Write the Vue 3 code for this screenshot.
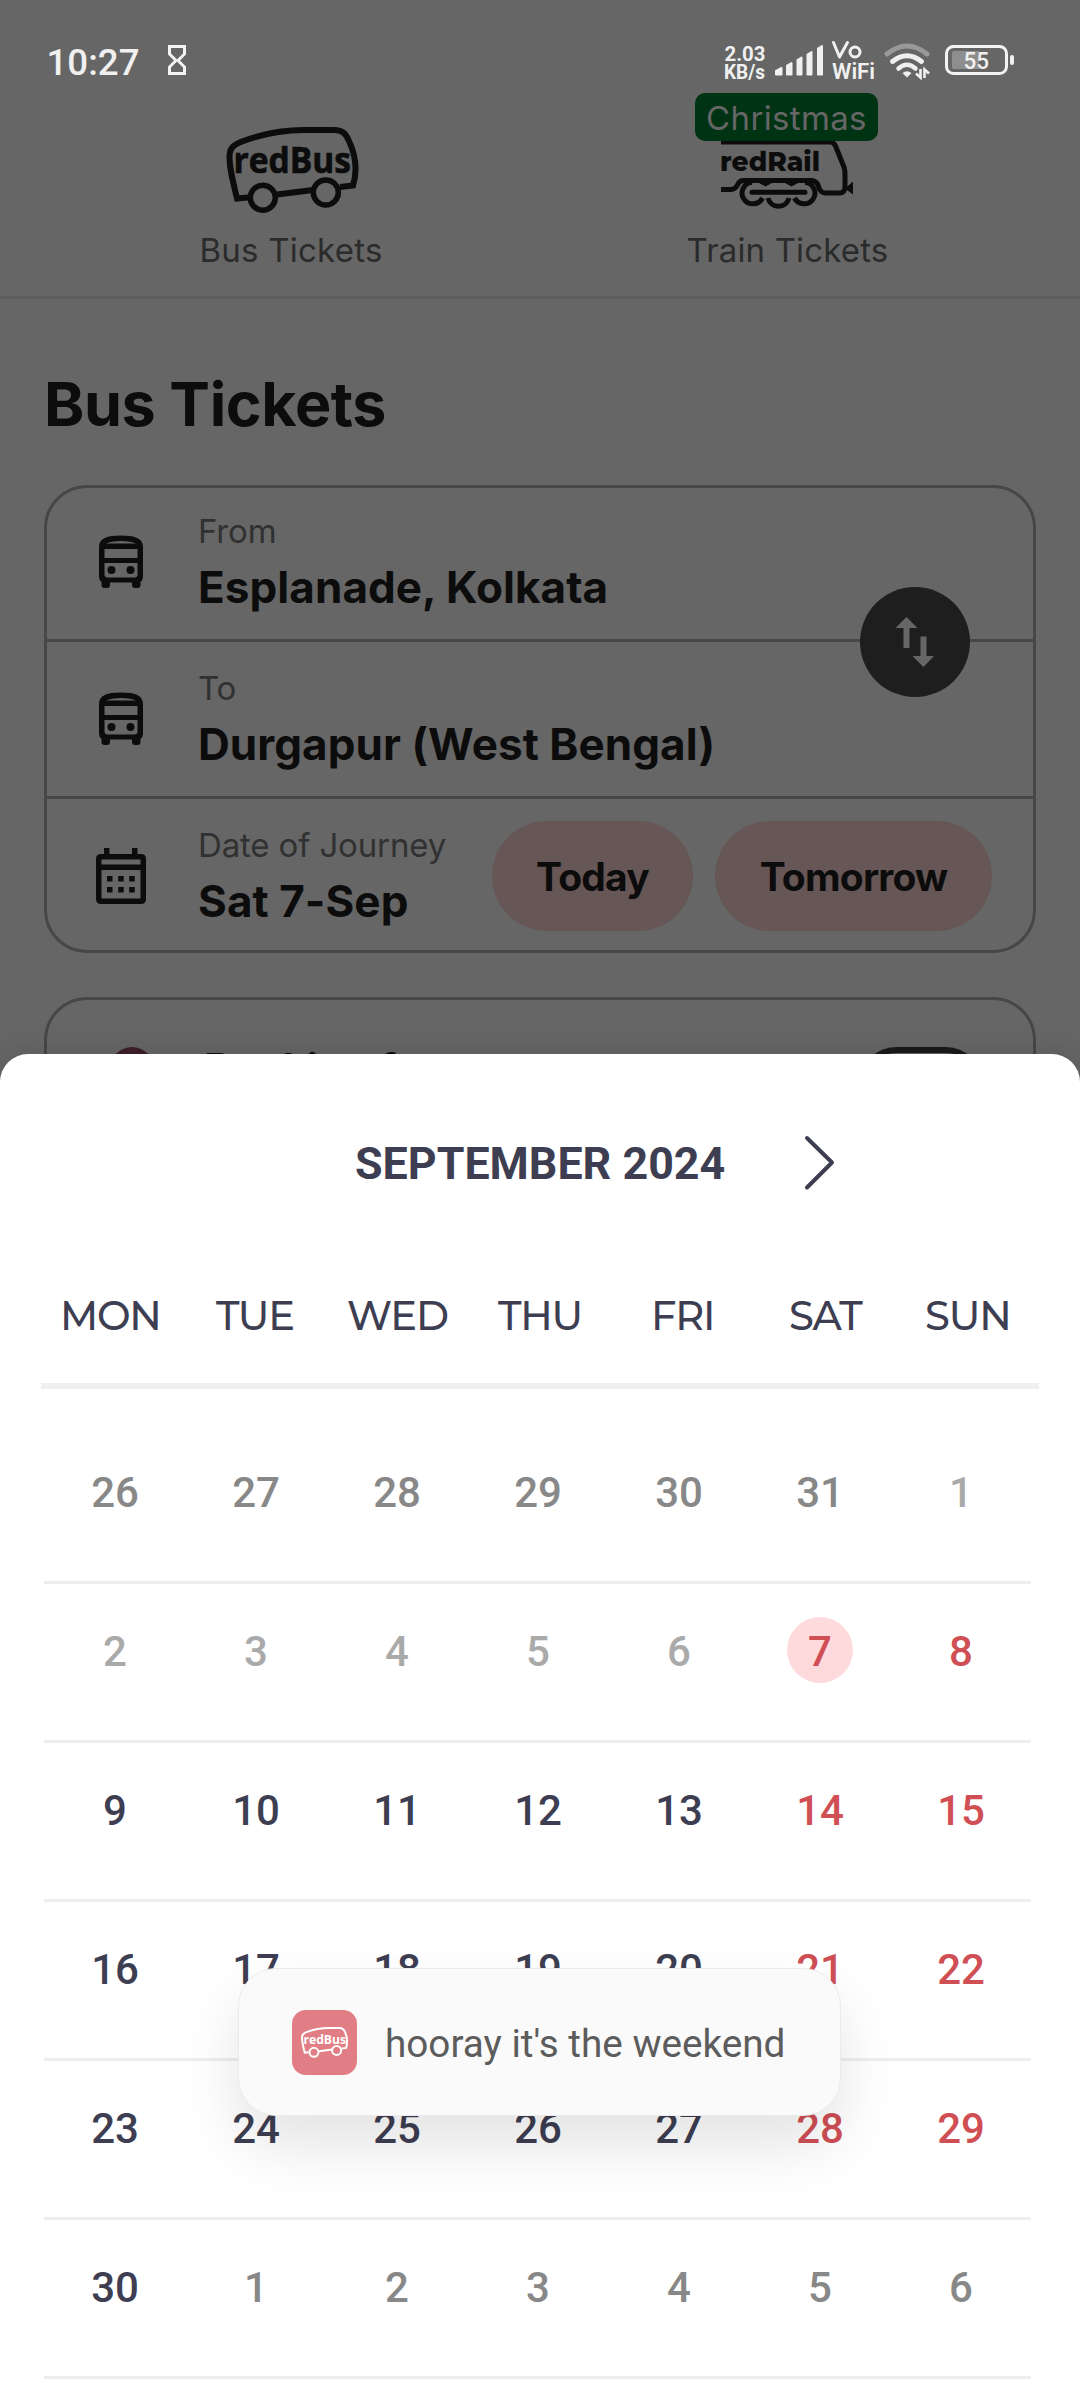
<script setup>
const weekdays = ['MON', 'TUE', 'WED', 'THU', 'FRI', 'SAT', 'SUN']

const numbers = [
  [26, 27, 28, 29, 30, 31, 1],
  [2, 3, 4, 5, 6, 7, 8],
  [9, 10, 11, 12, 13, 14, 15],
  [16, 17, 18, 19, 20, 21, 22],
  [23, 24, 25, 26, 27, 28, 29],
  [30, 1, 2, 3, 4, 5, 6],
]

function tone(row, col) {
  if ((row === 0 && col < 6) || (row === 5 && col > 0)) return 'outside'
  if (row === 0 || (row === 1 && col < 5)) return 'past'
  return col > 4 ? 'weekend' : ''
}

const weeks = numbers.map((week, row) =>
  week.map((n, col) => ({ n, tone: tone(row, col), selected: row === 1 && col === 5 }))
)

const stops = [
  { label: 'From', value: 'Esplanade, Kolkata' },
  { label: 'To', value: 'Durgapur (West Bengal)' },
]
</script>

<template>
  <div class="screen">
    <header class="status">
      <svg class="clock" width="180" height="50" viewBox="40 36 180 50">
        <text x="46.500" y="75" textLength="93" lengthAdjust="spacingAndGlyphs" class="rb" font-size="37" font-weight="500">10:27</text>
        <path d="M169.500 46.500h15v7.500L178 60.500L184.500 67v6.500h-15V67L176 60.500L169.500 54z" fill="none" stroke="#f3f3f3" stroke-width="3" />
      </svg>
      <svg class="system" width="310" height="50" viewBox="715 36 310 50">
        <g class="rb">
          <text x="724.500" y="61.200" textLength="41" lengthAdjust="spacingAndGlyphs" font-size="21" font-weight="700">2.03</text>
          <text x="724" y="79.200" textLength="41" lengthAdjust="spacingAndGlyphs" font-size="21" font-weight="700">KB/s</text>
        </g>
        <g fill="#f0f0f0" stroke="#f0f0f0" stroke-width="2" stroke-linejoin="round">
          <path d="M776 74.500v-3.500l5.500-3v6.500z" />
          <path d="M787 74.500v-9l4.500-2.500v11.500z" />
          <path d="M797.500 74.500v-14.500l4-2.500v17z" />
          <path d="M807.500 74.500v-20l4-2.500v22.500z" />
          <path d="M818 74.500v-26l4-2.500v28.500z" />
        </g>
        <g fill="none" stroke="#f0f0f0" stroke-width="3" stroke-linecap="round" stroke-linejoin="round">
          <path d="M833.500 42.500l6 14.500l8-14.500" />
          <circle cx="855" cy="52" r="5" />
        </g>
        <text x="832" y="79" textLength="43" lengthAdjust="spacingAndGlyphs" class="rb" font-size="21.500" font-weight="600">WiFi</text>
        <g fill="none" stroke-linecap="round">
          <path d="M887 54Q907 38 927 54" stroke="#999" stroke-width="5" />
          <path d="M892.500 61.500Q907 50 921.500 61.500" stroke="#f0f0f0" stroke-width="5" />
          <path d="M898.500 68.500Q907 61 915.500 68.500" stroke="#f0f0f0" stroke-width="4.500" />
        </g>
        <path d="M902.500 73Q907 69.500 911.500 73L907 77.500z" fill="#f0f0f0" />
        <path d="M920.500 69v8.500l-4.500-4M924.500 78v-8.500l4.500 4" fill="none" stroke="#f0f0f0" stroke-width="2.600" />
        <rect x="946.500" y="46.500" width="60" height="27" rx="7" fill="none" stroke="#f3f3f3" stroke-width="3" />
        <path d="M954 51h25v18h-25a2 2 0 0 1-2-2v-14a2 2 0 0 1 2-2z" fill="#8e8e8e" />
        <rect x="1010" y="55" width="4" height="10" rx="2" fill="#f0f0f0" />
        <text x="963.500" y="69.200" textLength="25.500" lengthAdjust="spacingAndGlyphs" class="rb" font-size="23" font-weight="500">55</text>
      </svg>
    </header>

    <nav class="tabs">
      <div class="tab">
        <svg class="logo" width="140" height="96" viewBox="221 122 140 96">
          <g fill="none" stroke="#0c0c0c" stroke-width="6">
            <path d="M248 197.500L237 198.500C232 178 229.500 168 229.500 157C229.500 148 233 145 242 141.500C262 134 284 130 304 130H334C343 130 346 134 349 141C355.500 155 357.500 171 353 185.500L340 187" />
            <path d="M277 194.500L313 190" />
            <circle cx="262.800" cy="197.700" r="12.500" stroke-width="5.500" />
            <circle cx="325.800" cy="192.500" r="12.500" stroke-width="5.500" />
          </g>
          <text x="233.500" y="172.600" textLength="117.500" lengthAdjust="spacingAndGlyphs" class="mark" font-size="36">redBus</text>
        </svg>
        <span class="tab-name">Bus Tickets</span>
      </div>
      <div class="tab">
        <svg class="logo" width="140" height="96" viewBox="719 122 140 96">
          <g fill="none" stroke="#0c0c0c" stroke-width="5">
            <path d="M721 142H830Q834 142 835.500 146L844 167Q845 170 845 174V187Q844.500 193 840 193H825Q821.500 193 819.500 189L817.500 184Q815.500 180.500 811 180.500H744Q739.500 180.500 738 184Q735.500 189.500 731 189.500H721" />
            <path d="M845 188.500l8-7v13z" fill="#0c0c0c" stroke="none" />
            <path d="M762.500 198A10.800 10.800 0 1 1 752 182.300" />
            <path d="M768 198A10.800 10.800 0 0 0 789 198" />
            <path d="M794.500 198A10.800 10.800 0 1 0 805 182.300" />
            <path d="M759 183l6.500 3.500l6.500-3.500zM785 183l6.500 3.500l6.500-3.500z" stroke="none" fill="#0c0c0c" />
            <path d="M752 192.200H805" stroke-linecap="round" />
          </g>
          <text x="720" y="170.800" textLength="100" lengthAdjust="spacingAndGlyphs" class="rail" font-size="27">redRail</text>
        </svg>
        <span class="tab-name train">Train Tickets</span>
        <span class="badge">Christmas</span>
      </div>
    </nav>

    <main class="page">
      <h1>Bus Tickets</h1>

      <section class="card">
        <div v-for="stop in stops" :key="stop.label" class="field">
          <svg class="icon" width="44" height="54" viewBox="0 0 44 54">
            <path fill-rule="evenodd" fill="#0c0c0c" d="M0 12C0 3 8 .5 22 .5S44 3 44 12V42Q44 45 41.500 47V50Q41.500 53 38.500 53H36Q33 53 33 50V47.500H11V50Q11 53 8 53H5.500Q2.500 53 2.500 50V47Q0 45 0 42zM7 8.500H37Q32 6 22 6T7 8.500zM5.500 14V23H38.500V14zM5.500 28V39.500Q5.500 42.500 8.500 42.500H35.500Q38.500 42.500 38.500 39.500V28z" />
            <circle cx="12.500" cy="35" r="4" fill="#0c0c0c" />
            <circle cx="31.500" cy="35" r="4" fill="#0c0c0c" />
          </svg>
          <div class="copy">
            <span class="label">{{ stop.label }}</span>
            <span class="value">{{ stop.value }}</span>
          </div>
        </div>
        <div class="field last">
          <svg class="icon cal" width="50" height="56" viewBox="0 0 50 56">
            <path fill-rule="evenodd" fill="#0c0c0c" d="M8 0h5.500v6h22.500V0h5.500v6H45q5 0 5 5v40q0 5-5 5H5q-5 0-5-5V11q0-5 5-5h3zM5.500 11.500v5h39v-5zM5.500 22v28.500h39V22z" />
            <path fill="#0c0c0c" d="M11 28h5.500v5.500H11zM22.200 28h5.500v5.500h-5.500zM33.200 28h5.500v5.500h-5.500zM11 39h5.500v5.500H11zM22.200 39h5.500v5.500h-5.500zM33.200 39h5.500v5.500h-5.500z" />
          </svg>
          <div class="copy">
            <span class="label">Date of Journey</span>
            <span class="value">Sat 7-Sep</span>
          </div>
          <div class="quick">
            <button class="today">Today</button>
            <button class="tomorrow">Tomorrow</button>
          </div>
        </div>
        <button class="swap">
          <svg width="110" height="110" viewBox="0 0 110 110" fill="#666">
            <path d="M46.500 30L57.500 41H49.500V61H43.500V41H35.500zM63.500 80L52.500 69H60.500V49.500H66.500V69H74z" />
          </svg>
        </button>
      </section>

      <section class="card women">
        <i class="avatar"></i>
        <span class="booking">Booking for women</span>
        <i class="toggle"></i>
      </section>
    </main>

    <section class="sheet">
      <div class="month">
        <h2>SEPTEMBER 2024</h2>
        <svg width="34" height="58" viewBox="0 0 34 58">
          <path d="M4 4L29 28.500L4 53.500" fill="none" stroke="#3e3e52" stroke-width="4" stroke-linecap="round" stroke-linejoin="round" />
        </svg>
      </div>
      <div class="weekdays">
        <span v-for="d in weekdays" :key="d">{{ d }}</span>
      </div>
      <div class="weeks">
        <div v-for="(week, i) in weeks" :key="i" class="week">
          <div v-for="(day, j) in week" :key="j" class="day" :class="[day.tone, { selected: day.selected }]">
            <span>{{ day.n }}</span>
          </div>
        </div>
      </div>
    </section>

    <div class="toast">
      <svg width="65" height="65" viewBox="0 0 65 65">
        <rect width="65" height="65" rx="14" fill="#e17d84" />
        <g transform="translate(8.700 16.500) scale(.36)">
          <g transform="translate(-226 -126)" fill="none" stroke="#fff" stroke-width="5.500">
            <path d="M248 197.500L237 198.500C232 178 229.500 168 229.500 157C229.500 148 233 145 242 141.500C262 134 284 130 304 130H334C343 130 346 134 349 141C355 155 356.500 171 352 185.500L340 187" />
            <path d="M277 194.500L313 190" />
            <circle cx="262.800" cy="197.700" r="12.500" />
            <circle cx="325.800" cy="192.500" r="12.500" />
          </g>
        </g>
        <text x="11.500" y="33.500" textLength="42.500" lengthAdjust="spacingAndGlyphs" class="mini" font-size="13">redBus</text>
      </svg>
      <span>hooray it's the weekend</span>
    </div>
  </div>
</template>

<style>
body {
  margin: 0;
  background: #666;
}
</style>

<style scoped>
.screen {
  position: relative;
  width: 1080px;
  height: 2400px;
  overflow: hidden;
  box-sizing: border-box;
  background: #666;
  font-family: Inter, "Liberation Sans", sans-serif;
}
button {
  border: 0;
  padding: 0;
  font-family: inherit;
}
svg {
  display: block;
  flex: none;
}
.status {
  height: 86px;
  box-sizing: border-box;
  padding: 36px 55px 0 40px;
  display: flex;
  justify-content: space-between;
}
.rb {
  font-family: Roboto, sans-serif;
  fill: #f0f0f0;
}
.tabs {
  height: 213px;
  box-sizing: border-box;
  border-bottom: 3px solid #5c5c5c;
  display: flex;
  padding: 36px 42px 0;
}
.tab {
  position: relative;
  width: 498px;
  display: flex;
  flex-direction: column;
  align-items: center;
}
.tab-name {
  margin-top: 12px;
  font-size: 33px;
  line-height: 40px;
  font-weight: 400;
  letter-spacing: .25px;
  color: #2b2b2b;
}
.train {
  margin-right: 3px;
  letter-spacing: .15px;
}
.badge {
  position: absolute;
  top: -29px;
  left: 155px;
  width: 183px;
  height: 48px;
  border-radius: 10px;
  background: #003314;
  color: #666;
  font-size: 33px;
  font-weight: 400;
  letter-spacing: .35px;
  line-height: 50px;
  text-align: center;
}
.mark {
  font-family: "Open Sans", "Noto Sans", sans-serif;
  font-weight: 700;
  fill: #0c0c0c;
  stroke: #0c0c0c;
  stroke-width: .7px;
}
.rail {
  font-family: Montserrat, Lato, sans-serif;
  font-weight: 800;
  fill: #0c0c0c;
}
.mini {
  font-family: "Open Sans", "Noto Sans", sans-serif;
  font-weight: 700;
  fill: #fff;
}
.page {
  padding: 68px 44px 0;
}
h1 {
  margin: 0 0 44px;
  font-size: 61px;
  line-height: 74px;
  font-weight: 700;
  letter-spacing: -.4px;
  color: #0c0c0c;
  white-space: nowrap;
}
.card {
  position: relative;
  box-sizing: border-box;
  height: 468px;
  border: 3px solid #474747;
  border-radius: 43px;
}
.field {
  height: 157px;
  box-sizing: border-box;
  border-bottom: 3px solid #474747;
  display: flex;
  padding: 3px 0 0 52px;
}
.field:first-child {
  height: 154px;
  padding-top: 0;
}
.field.last {
  height: 151px;
  border: 0;
  padding-left: 49px;
}
.icon {
  margin-top: 47px;
  margin-right: 55px;
}
.icon.cal {
  margin-top: 46px;
  margin-right: 52px;
}
.copy {
  display: flex;
  flex-direction: column;
  padding-top: 23px;
  white-space: nowrap;
}
.label {
  font-size: 33px;
  line-height: 40px;
  font-weight: 400;
  letter-spacing: -.15px;
  color: #313131;
}
.value {
  margin-top: 9px;
  font-size: 44px;
  line-height: 54px;
  font-weight: 700;
  letter-spacing: .07px;
  color: #0c0c0c;
}
.quick {
  display: flex;
  gap: 22px;
  margin: 19px 41px 0 auto;
}
.quick button {
  height: 110px;
  border-radius: 55px;
  background: #665655;
  color: #0c0c0c;
  font-size: 39px;
  font-weight: 700;
  letter-spacing: -.8px;
}
.today {
  width: 201px;
}
.tomorrow {
  width: 277px;
}
.swap {
  position: absolute;
  left: 813px;
  top: 99px;
  width: 110px;
  height: 110px;
  border-radius: 50%;
  background: #1e1e1e;
}
.women {
  margin-top: 44px;
  display: flex;
  padding: 47px 51px 0 63px;
}
.avatar {
  width: 44px;
  height: 44px;
  border-radius: 50%;
  background: #3f2028;
}
.booking {
  margin-left: 50px;
  font-size: 42px;
  line-height: 43px;
  font-weight: 700;
  letter-spacing: -.3px;
  color: #0c0c0c;
  white-space: nowrap;
}
.toggle {
  box-sizing: border-box;
  width: 122px;
  height: 72px;
  margin-left: auto;
  border: 6px solid #1b1b1b;
  border-radius: 36px;
}
.sheet {
  position: absolute;
  left: 0;
  top: 1054px;
  width: 1080px;
  height: 1346px;
  overflow: hidden;
  border-radius: 28px 28px 0 0;
  background: #fff;
  box-shadow: 0 0 30px rgba(0, 0, 0, .14);
}
.month {
  height: 217px;
  padding: 1px 0 0 355px;
  box-sizing: border-box;
  display: flex;
  align-items: center;
  color: #3e3e52;
}
.month h2 {
  margin: 0;
  width: 448px;
  font-family: Roboto, sans-serif;
  font-size: 44.800px;
  font-weight: 700;
  white-space: nowrap;
}
.weekdays {
  margin: 0 41px;
  height: 118px;
  box-sizing: border-box;
  padding: 0 0 23px;
  border-bottom: 6px solid #eff1f0;
  display: flex;
  align-items: center;
  font-family: Montserrat, Lato, sans-serif;
  font-size: 40px;
  font-weight: 500;
  letter-spacing: -1.2px;
  color: #3e3e52;
}
.weekdays span {
  flex: 1;
  text-align: center;
}
.weekdays span:first-child {
  position: relative;
  left: -2px;
}
.weeks {
  margin: 36px 49px 0 44px;
}
.week {
  height: 159px;
  box-sizing: border-box;
  border-bottom: 3px solid #eee;
  display: flex;
}
.day {
  flex: 1;
  display: flex;
  justify-content: center;
  padding-top: 33px;
  font-family: Roboto, sans-serif;
  font-size: 42px;
  font-weight: 500;
  color: #3e3e52;
}
.day span {
  box-sizing: border-box;
  width: 66px;
  height: 66px;
  padding-left: 1px;
  line-height: 70px;
  border-radius: 50%;
  text-align: center;
}
.outside {
  color: #888;
}
.past {
  color: #aaa;
}
.weekend {
  color: #cf4f55;
}
.selected span {
  background: #ffdadc;
}
.toast {
  position: absolute;
  left: 238px;
  top: 1968px;
  width: 603px;
  height: 148px;
  box-sizing: border-box;
  border: 1px solid #ebebeb;
  border-radius: 38px;
  padding-left: 53px;
  display: flex;
  align-items: center;
  gap: 28px;
  background: #fafafa;
  box-shadow: 0 30px 60px rgba(0, 0, 0, .11);
  font-family: Roboto, sans-serif;
  font-size: 38.700px;
  color: #5c5c5c;
  white-space: nowrap;
}
.toast span {
  padding-top: 3px;
}
</style>
